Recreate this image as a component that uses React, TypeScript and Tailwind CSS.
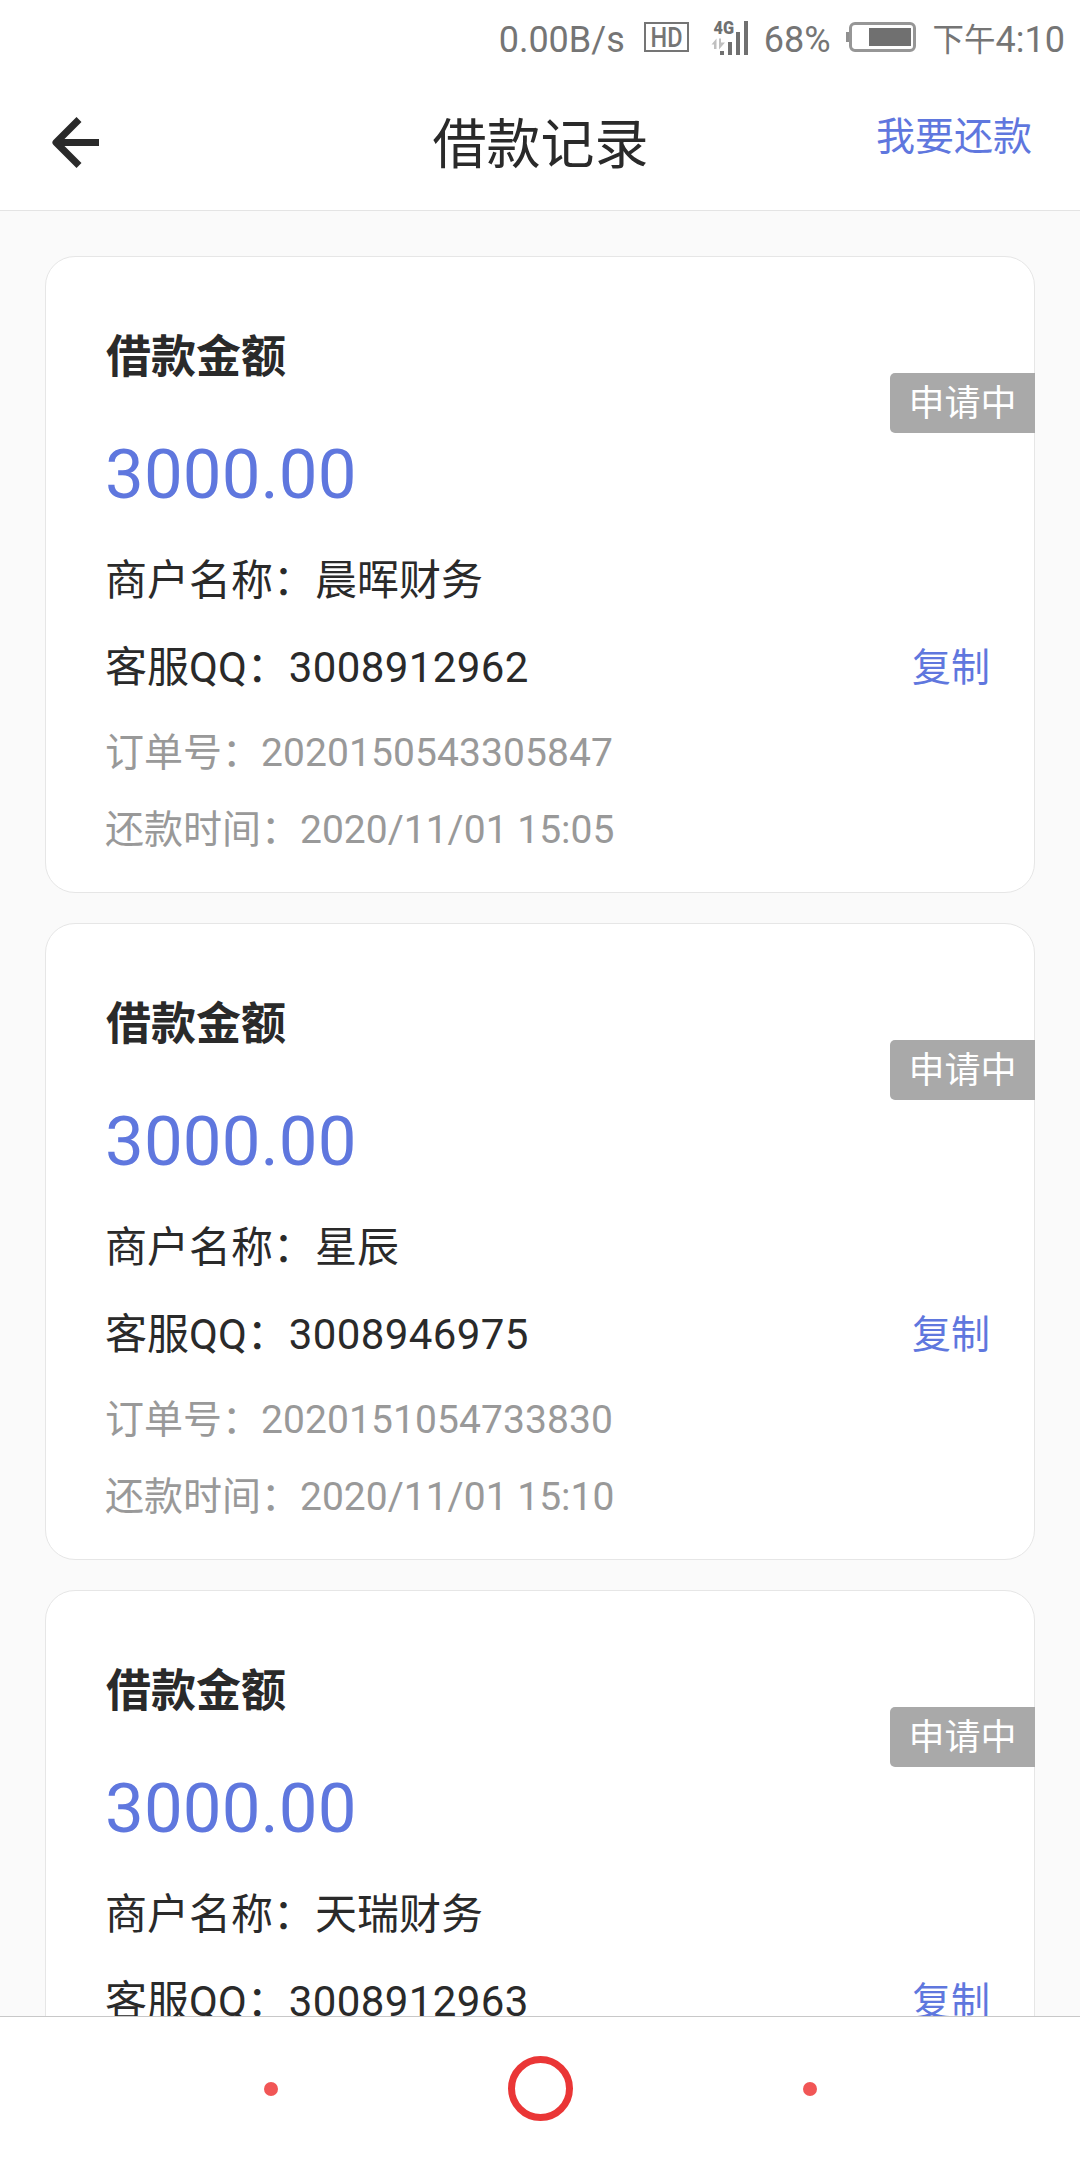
interface LoanRecord {
  amount: string;
  merchant: string;
  qq: string;
  orderNo: string;
  repayTime: string;
  status: string;
}

const records: LoanRecord[] = [
  {
    amount: '3000.00',
    merchant: '晨晖财务',
    qq: '3008912962',
    orderNo: '2020150543305847',
    repayTime: '2020/11/01 15:05',
    status: '申请中',
  },
  {
    amount: '3000.00',
    merchant: '星辰',
    qq: '3008946975',
    orderNo: '2020151054733830',
    repayTime: '2020/11/01 15:10',
    status: '申请中',
  },
  {
    amount: '3000.00',
    merchant: '天瑞财务',
    qq: '3008912963',
    orderNo: '2020151054733831',
    repayTime: '2020/11/01 15:12',
    status: '申请中',
  },
];

const SignalIcon = () => (
  <svg width="38" height="36" viewBox="0 0 38 36" fill="#707070" className="overflow-visible">
    <text x="3.5" y="14.5" fontSize="17.5" fontWeight="900" textLength="20.5" lengthAdjust="spacingAndGlyphs">4G</text>
    <path d="M6.5 19.5L1.5 25.5H4V30H6.5zM9 30.5V19.5H11V23.5H15z" fill="#c0c0c0" />
    <rect x="10" y="32" width="4" height="4" />
    <rect x="18" y="23" width="4" height="13" />
    <rect x="26" y="13" width="4" height="23" />
    <rect x="34" y="2" width="4" height="34" />
  </svg>
);

const BatteryIcon = () => (
  <svg width="70" height="30" viewBox="0 0 70 30">
    <rect x="0" y="10" width="4" height="10" fill="#909090" />
    <rect x="4.5" y="1.5" width="64" height="27" rx="4.5" fill="none" stroke="#969696" strokeWidth="3" />
    <rect x="23" y="6" width="42" height="18" fill="#707070" />
  </svg>
);

const StatusBar = () => (
  <div className="flex h-[78px] items-center justify-end pr-[15px] text-[36px] leading-[78px] text-[#757575]">
    <span className="mr-[19px] pt-px">0.00B/s</span>
    <svg width="45" height="30" viewBox="0 0 45 30" className="mr-[21px] -mt-1">
      <rect x="1" y="1" width="43" height="28" fill="none" stroke="#757575" strokeWidth="2" />
      <text x="6.5" y="24.5" fontSize="27" fontWeight="500" fill="#757575" textLength="32" lengthAdjust="spacingAndGlyphs">HD</text>
    </svg>
    <div className="mr-[16px] -mt-1">
      <SignalIcon />
    </div>
    <span className="mr-[15px] pt-px">68%</span>
    <div className="mr-[17px] -mt-1">
      <BatteryIcon />
    </div>
    <span className="pt-[3px] text-[31.5px]">下午</span>
    <span className="pt-px">4:10</span>
  </div>
);

const Header = () => (
  <header className="grid h-[133px] grid-cols-3 border-b border-[#e4e4e4] px-[48px]">
    <button className="mt-[36px] h-[56px] w-[56px]">
      <svg width="56" height="56" viewBox="0 0 56 56" fill="none" stroke="#2a2a2a" strokeWidth="7" strokeLinejoin="round">
        <path d="M31 5.5L8 28.5L31 51.5M8 28.5H51" />
      </svg>
    </button>
    <h1 className="pt-[38px] pl-px text-center text-[54px] leading-[60px] text-[#2a2a2a]">借款记录</h1>
    <a className="pt-[34px] text-right text-[39px] leading-[50px] text-[#5f77de]">我要还款</a>
  </header>
);

const LoanCard = ({ record }: { record: LoanRecord }) => (
  <div className="relative h-[637px] shrink-0 rounded-[30px] border border-[#e6e6e6] bg-white pt-[71px] pr-[44px] pl-[59px] text-[#2a2a2a]">
    <h2 className="pl-px text-[45px] leading-[60px] font-bold">借款金额</h2>
    <p className="mt-[47px] text-[69px] leading-[80px] tracking-[0.1px] text-[#5f77de]">{record.amount}</p>
    <p className="mt-[36px] text-[42px] leading-[60px]">商户名称：{record.merchant}</p>
    <div className="mt-[27px] flex items-center justify-between leading-[60px]">
      <span className="text-[42px]">
        客服QQ：<span className="tracking-[0.4px]">{record.qq}</span>
      </span>
      <button className="text-[39px] text-[#5f77de]">复制</button>
    </div>
    <p className="mt-[30px] text-[39px] leading-[50px] text-[#999999]">
      订单号：<span className="tracking-[0.08px]">{record.orderNo}</span>
    </p>
    <p className="mt-[27px] text-[39px] leading-[50px] text-[#999999]">还款时间：{record.repayTime}</p>
    <span className="absolute top-[116px] -right-px h-[60px] w-[145px] rounded-l-[5px] bg-[#a9a9a9] text-center text-[36px] leading-[62px] text-white">
      {record.status}
    </span>
  </div>
);

const NavBar = () => (
  <nav className="flex h-[144px] shrink-0 items-center justify-center gap-[230px] border-t border-[#c8c8c8] bg-white">
    <span className="h-[14px] w-[14px] rounded-full bg-[#f15656]" />
    <span className="h-[65px] w-[65px] rounded-full border-[7px] border-[#ea3636]" />
    <span className="h-[14px] w-[14px] rounded-full bg-[#f15656]" />
  </nav>
);

export default function App() {
  return (
    <div className="flex h-[2160px] w-[1080px] flex-col overflow-hidden bg-white font-[Roboto,'Noto_Sans_CJK_SC',sans-serif]" lang="zh-CN">
      <StatusBar />
      <Header />
      <main className="flex min-h-0 flex-1 flex-col gap-[30px] overflow-hidden bg-[#fafafa] px-[45px] pt-[45px]">
        {records.map((record) => (
          <LoanCard key={record.orderNo} record={record} />
        ))}
      </main>
      <NavBar />
    </div>
  );
}
